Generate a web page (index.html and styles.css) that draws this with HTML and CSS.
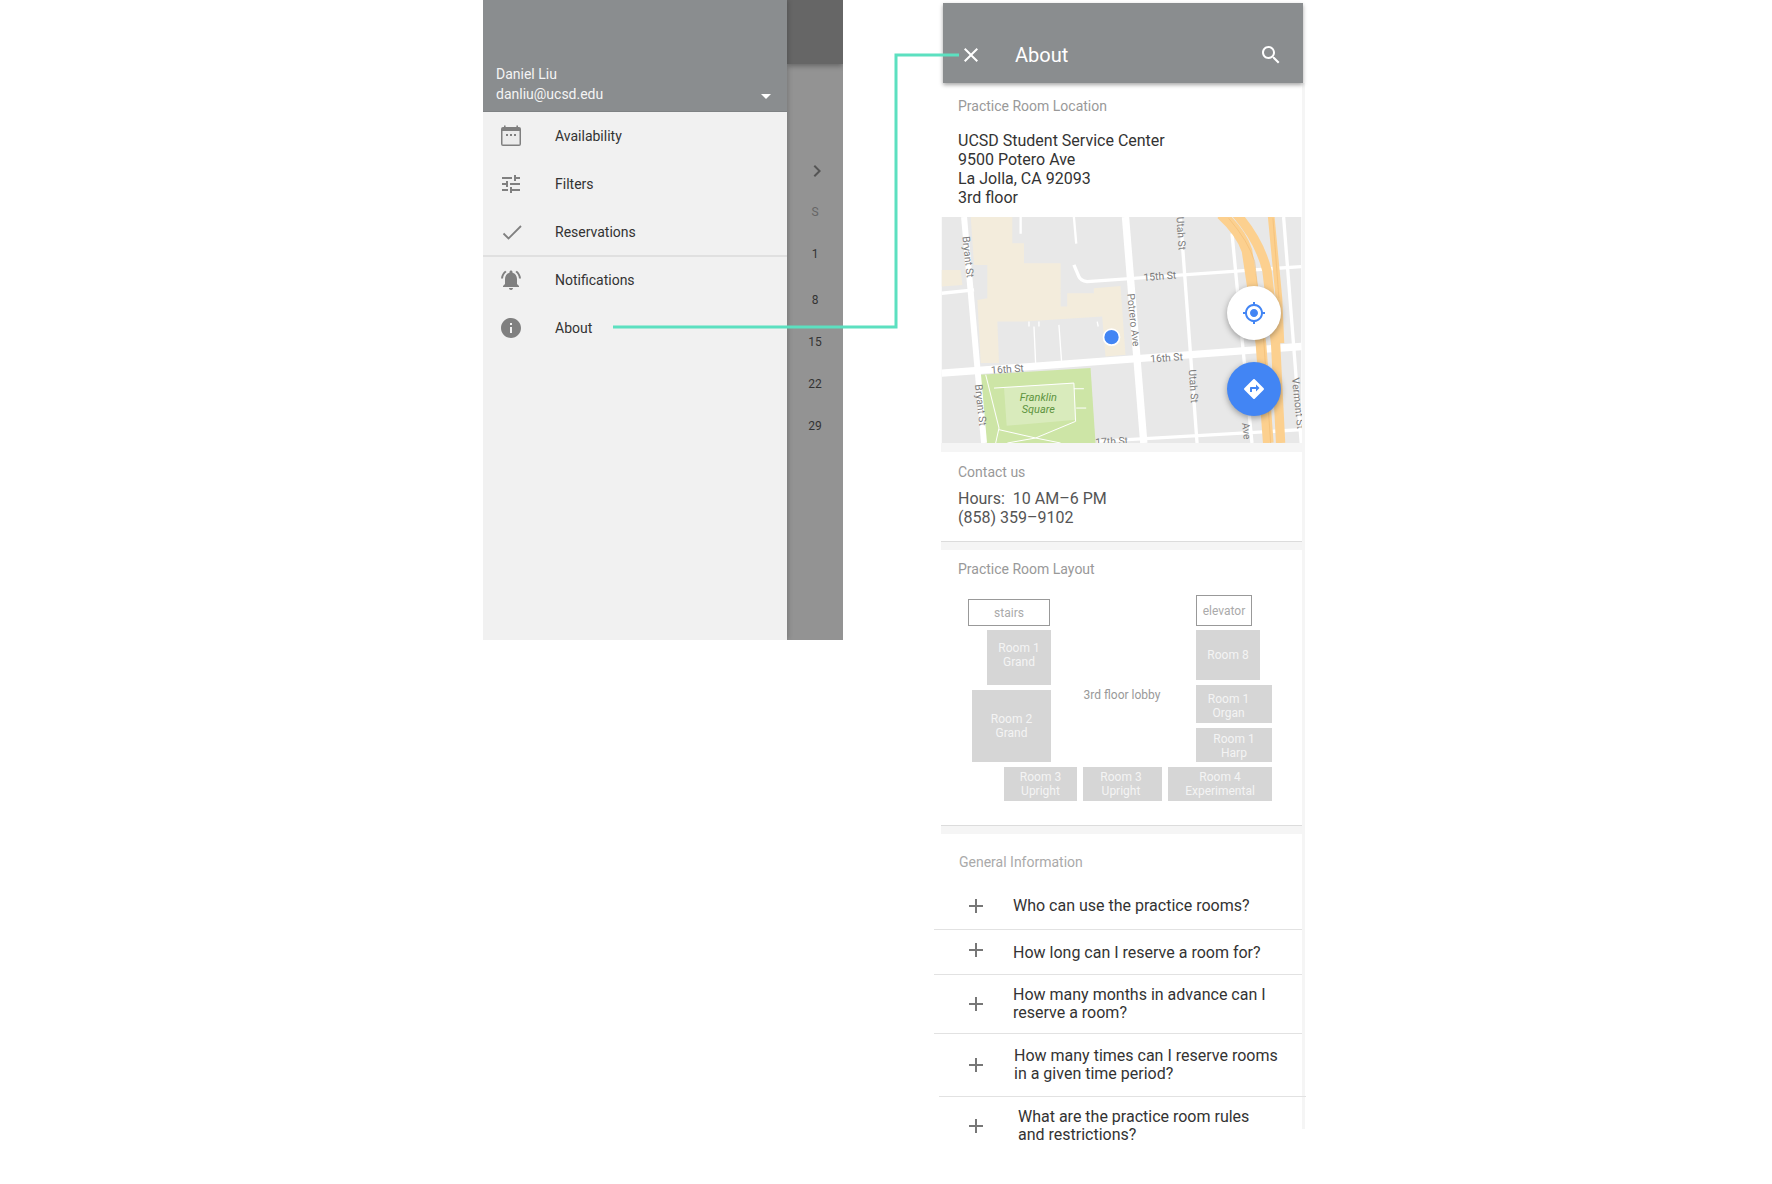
FILE: index.html
```html
<!DOCTYPE html>
<html lang="en">
<head>
<meta charset="utf-8">
<title>About</title>
<link rel="stylesheet" href="styles.css">
</head>
<body>
<div class="stage">
  <section class="menu-screen">
    <aside class="drawer">
      <header class="account">
        <div>Daniel Liu</div>
        <div class="account-mail">danliu@ucsd.edu<span class="caret"></span></div>
      </header>
      <nav class="nav">
        <div class="nav-row">
          <svg class="nav-icon" viewBox="0 0 24 24"><path fill="#808080" d="M5 1.500h1.600V3h10.800V1.500H19V3h1a2 2 0 0 1 2 2v15a2 2 0 0 1-2 2H4a2 2 0 0 1-2-2V5a2 2 0 0 1 2-2h1z"/><rect x="3.500" y="7" width="17" height="13.500" fill="#ececec"/><rect x="7" y="10" width="2" height="2" fill="#808080"/><rect x="11" y="10" width="2" height="2" fill="#808080"/><rect x="15" y="10" width="2" height="2" fill="#808080"/></svg>
          <span>Availability</span>
        </div>
        <div class="nav-row">
          <svg class="nav-icon" viewBox="0 0 24 24"><path fill="#808080" d="M3 17v2h6v-2H3zM3 5v2h10V5H3zm10 16v-2h8v-2h-8v-2h-2v6h2zM7 9v2H3v2h4v2h2V9H7zm14 4v-2H11v2h10zm-6-4h2V7h4V5h-4V3h-2v6z"/></svg>
          <span>Filters</span>
        </div>
        <div class="nav-row">
          <svg class="nav-icon" viewBox="0 0 24 24"><path fill="none" stroke="#808080" stroke-width="1.800" d="M4.500 13.500l5 5L22 6"/></svg>
          <span>Reservations</span>
        </div>
        <div class="nav-rule"></div>
        <div class="nav-row">
          <svg class="nav-icon" viewBox="0 0 24 24"><path fill="#808080" d="M7.580 4.080L6.150 2.650C3.750 4.480 2.170 7.300 2.030 10.500h2c.15-2.650 1.510-4.970 3.550-6.420zm12.390 6.420h2c-.15-3.200-1.730-6.020-4.120-7.850l-1.420 1.430c2.020 1.450 3.390 3.770 3.540 6.420zM18 11c0-3.070-1.640-5.640-4.500-6.320V4c0-.83-.67-1.500-1.500-1.500s-1.500.67-1.500 1.500v.68C7.630 5.360 6 7.920 6 11v5l-2 2v1h16v-1l-2-2v-5zm-6 11c.14 0 .27-.01.4-.04.65-.14 1.180-.58 1.440-1.180.1-.24.15-.5.15-.78h-4c.01 1.100.9 2 2.010 2z"/></svg>
          <span>Notifications</span>
        </div>
        <div class="nav-row">
          <svg class="nav-icon" viewBox="0 0 24 24"><path fill="#808080" d="M12 2C6.480 2 2 6.480 2 12s4.480 10 10 10 10-4.480 10-10S17.520 2 12 2zm1 15h-2v-6h2v6zm0-8h-2V7h2v2z"/></svg>
          <span>About</span>
        </div>
      </nav>
    </aside>
    <div class="behind">
      <div class="behind-bar"></div>
      <svg class="chevron" viewBox="0 0 24 24"><path fill="#555" d="M10 6L8.590 7.410 13.170 12l-4.580 4.590L10 18l6-6z"/></svg>
      <div class="day day-head">S</div>
      <div class="day">1</div>
      <div class="day day-eight">8</div>
      <div class="day day-after">15</div>
      <div class="day">22</div>
      <div class="day">29</div>
    </div>
  </section>

  <section class="about-screen">
    <header class="appbar">
      <svg class="bar-icon" viewBox="0 0 24 24"><path fill="#fff" d="M19 6.410L17.590 5 12 10.590 6.410 5 5 6.410 10.590 12 5 17.590 6.410 19 12 13.410 17.590 19 19 17.590 13.410 12z"/></svg>
      <h1 class="bar-title">About</h1>
      <svg class="bar-icon" viewBox="0 0 24 24"><path fill="#fff" d="M15.500 14h-.79l-.28-.27C15.410 12.590 16 11.110 16 9.500 16 5.910 13.090 3 9.500 3S3 5.910 3 9.500 5.910 16 9.500 16c1.610 0 3.090-.59 4.230-1.570l.27.28v.79l5 4.990L20.490 19l-4.990-5zm-6 0C7.010 14 5 11.990 5 9.500S7.010 5 9.500 5 14 7.010 14 9.500 11.990 14 9.500 14z"/></svg>
    </header>
    <div class="content">
      <div class="location">
        <h2 class="label">Practice Room Location</h2>
        <p class="address">UCSD Student Service Center<br>9500 Potero Ave<br>La Jolla, CA 92093<br>3rd floor</p>
      </div>
      <div class="map">
        <svg class="map-art" viewBox="33 21 1080 679">
          <rect x="33" y="21" width="1080" height="679" fill="#e8e8e8"/>
          <path fill="#f3ecdc" d="M120 21h125v79h35v60h110v130h20v-40h80v-15l80-7 15 207-60 5-10-120-235 15h-80l5 125h-55l-10-190 30-5V165h-40zM33 180h57l5 45-62 5z"/>
          <path fill="#cde5a6" d="M148 495l332-20 15 225H165z"/>
          <path fill="#d9ebbc" d="M220 533l210-15 7 112-209 18z"/>
          <g fill="none" stroke="#fff">
            <path stroke-width="22" d="M33 490L1113 410"/>
            <path stroke-width="18" d="M100 21l60 679"/>
            <path stroke-width="22" d="M585 21l55 679"/>
            <path stroke-width="10" d="M33 250l97-10M430 165l15 35q5 12 25 15L1113 170"/>
            <path stroke-width="10" d="M750 21l50 679M1060 21l53 679M500 695l613-35M905 70l60 630"/>
            <path stroke-width="7" d="M270 21v50M430 21l7 80"/>
            <path stroke-width="4" d="M310 350l5 110M385 345l8 110M295 335v15M325 335v15M500 335l3 15"/>
            <path stroke-width="3" d="M165 495l40 160-10 45M205 660l110 25 120-50-5-115-240 15M230 700l85-15 75 15M430 537h30M437 595h30"/>
          </g>
          <g fill="none" stroke="#fcd08f">
            <path stroke-width="32" d="M872 12q60 55 78 110l42 280 22 298"/>
            <path stroke-width="28" d="M918 12q70 80 92 170l26 220 15 298"/>
            <path stroke-width="20" d="M1022 12l24 253 6 135"/>
          </g>
          <g fill="none" stroke="#f2bd74" stroke-width="2">
            <path d="M895 25q60 70 78 130l28 245 20 300"/>
            <path d="M1028 25l18 240"/>
          </g>
          <g class="map-text">
            <text transform="translate(95 80) rotate(84)">Bryant St</text>
            <text transform="translate(133 525) rotate(84)">Bryant St</text>
            <text transform="translate(590 252) rotate(84)">Potrero Ave</text>
            <text transform="translate(775 480) rotate(86)">Utah St</text>
            <text transform="translate(738 21) rotate(86)">Utah St</text>
            <text transform="translate(1085 505) rotate(84)">Vermont St</text>
            <text transform="translate(640 213) rotate(-4)">15th St</text>
            <text transform="translate(660 458) rotate(-4)">16th St</text>
            <text transform="translate(182 492) rotate(-4)">16th St</text>
            <text transform="translate(495 708) rotate(-3)">17th St</text>
            <text transform="translate(935 640) rotate(84)">Ave</text>
          </g>
          <text class="park-text" x="323" y="573" text-anchor="middle">Franklin</text>
          <text class="park-text" x="323" y="609" text-anchor="middle">Square</text>
          <circle cx="543" cy="382" r="24" fill="#4285f4" stroke="#fff" stroke-width="5"/>
        </svg>
        <div class="fab fab-locate">
          <svg class="fab-icon" viewBox="0 0 24 24"><path fill="#4285f4" d="M12 8c-2.210 0-4 1.790-4 4s1.790 4 4 4 4-1.790 4-4-1.790-4-4-4zm8.940 3c-.46-4.170-3.770-7.480-7.940-7.940V1h-2v2.060C6.830 3.520 3.520 6.830 3.060 11H1v2h2.060c.46 4.170 3.770 7.480 7.940 7.940V23h2v-2.060c4.170-.46 7.480-3.770 7.940-7.940H23v-2h-2.060zM12 19c-3.870 0-7-3.130-7-7s3.130-7 7-7 7 3.130 7 7-3.130 7-7 7z"/></svg>
        </div>
        <div class="fab fab-route">
          <svg class="fab-icon" viewBox="0 0 24 24"><path fill="#fff" d="M21.710 11.290l-9-9c-.39-.39-1.020-.39-1.410 0l-9 9c-.39.39-.39 1.020 0 1.410l9 9c.39.39 1.020.39 1.410 0l9-9c.39-.38.39-1.010 0-1.410zM14 14.500V12h-4v3H8v-4c0-.55.45-1 1-1h5V7.500l3.500 3.500-3.500 3.500z"/></svg>
        </div>
      </div>
      <div class="contact">
        <h2 class="label">Contact us</h2>
        <p class="contact-text">Hours:&nbsp; 10 AM–6 PM<br>(858) 359–9102</p>
      </div>
      <div class="layout">
        <h2 class="label">Practice Room Layout</h2>
        <div class="plan">
          <div class="outline stairs">stairs</div>
          <div class="outline elevator">elevator</div>
          <div class="room r1g">Room 1<br>Grand</div>
          <div class="room r8">Room 8</div>
          <div class="room r1o">Room 1<br>Organ</div>
          <div class="room r1h">Room 1<br>Harp</div>
          <div class="room r2g">Room 2<br>Grand</div>
          <div class="room r3a">Room 3<br>Upright</div>
          <div class="room r3b">Room 3<br>Upright</div>
          <div class="room r4">Room 4<br>Experimental</div>
          <div class="lobby">3rd floor lobby</div>
        </div>
      </div>
      <div class="general">
        <h2 class="label general-label">General Information</h2>
        <div class="faq faq-1"><span class="plus"></span><span>Who can use the practice rooms?</span></div>
        <div class="faq faq-2"><span class="plus"></span><span>How long can I reserve a room for?</span></div>
        <div class="faq faq-3"><span class="plus"></span><span>How many months in advance can I<br>reserve a room?</span></div>
        <div class="faq faq-4"><span class="plus"></span><span>How many times can I reserve rooms<br>in a given time period?</span></div>
        <div class="faq faq-5"><span class="plus"></span><span>What are the practice room rules<br>and restrictions?</span></div>
      </div>
    </div>
  </section>

  <svg class="connector" viewBox="0 0 1772 1184"><path fill="none" stroke="#5ce0c0" stroke-width="3" d="M613 327H896V55H959"/></svg>
</div>
</body>
</html>
```
FILE: styles.css
```css
* { box-sizing: border-box; }
html, body { margin: 0; padding: 0; background: #fff; }
body { font-family: Roboto, "Liberation Sans", sans-serif; overflow: hidden; }
h1, h2, p { margin: 0; font-weight: 400; }

.stage { position: relative; width: 1772px; height: 1184px; overflow: hidden; }

/* Left screen */
.menu-screen { position: absolute; left: 483px; top: 0; width: 360px; height: 640px; display: flex; overflow: hidden; }
.drawer { width: 304px; background: #f1f1f1; position: relative; z-index: 2; box-shadow: 1px 0 5px rgba(0,0,0,.2); }
.account { height: 112px; background: #8a8d8f; color: #f4f4f4; font-size: 14px; line-height: 20px; padding: 64px 13px 0; border-bottom: 1px solid #7f8284; }
.account-mail { display: flex; justify-content: space-between; align-items: center; }
.caret { width: 0; height: 0; border: 5px solid transparent; border-top-color: #fff; border-bottom-width: 0; margin: 4px 3px 0 0; }
.nav { display: flex; flex-direction: column; }
.nav-row { height: 48px; display: flex; align-items: center; padding-left: 16px; gap: 32px; font-size: 14px; color: #333; }
.nav-icon { width: 24px; height: 24px; flex: none; }
.nav-rule { height: 2px; margin: -1px 0 -1px; background: #e0e0e0; position: relative; }

.behind { width: 56px; background: #939393; display: flex; flex-direction: column; align-items: center; color: #333; font-size: 12px; position: relative; }
.behind-bar { align-self: stretch; height: 64px; background: #666; box-shadow: 0 2px 5px rgba(0,0,0,.3); flex: none; }
.chevron { width: 24px; height: 24px; margin: 95px 0 0 3px; flex: none; }
.day { height: 42px; line-height: 42px; }
.day-head { color: #666; margin-top: 9px; height: 41px; line-height: 41px; }
.day-eight { margin-top: 4px; }

/* Right screen */
.about-screen { position: absolute; left: 941px; top: 3px; width: 365px; }
.appbar { margin-left: 2px; width: 360px; height: 80px; background: #8a8d8f; display: flex; align-items: center; padding: 24px 20px 0 16px; box-shadow: 0 2px 4px rgba(0,0,0,.35); position: relative; z-index: 2; color: #fff; }
.bar-icon { width: 24px; height: 24px; flex: none; }
.bar-title { font-size: 20px; flex: 1; margin-left: 32px; }

.content { width: 364px; border-right: 3px solid #f5f5f5; }
.label { font-size: 14px; line-height: 16px; color: #999; }

.location { height: 134px; padding: 15px 0 0 17px; }
.address { font-size: 16px; line-height: 19px; color: #333; margin-top: 17px; }

.map { position: relative; height: 226px; }
.map-art { display: block; width: 361px; height: 226px; }
.map-text { font: 31px Roboto, sans-serif; fill: #7b7b7b; }
.park-text { font: italic 33px Roboto, sans-serif; fill: #5e9440; }
.fab { position: absolute; left: 286px; width: 54px; height: 54px; border-radius: 50%; display: flex; align-items: center; justify-content: center; box-shadow: 0 2px 6px rgba(0,0,0,.35); }
.fab-locate { top: 69px; background: #fff; }
.fab-route { top: 145px; background: #4285f4; }
.fab-icon { width: 24px; height: 24px; }

.contact { height: 99px; border-top: 9px solid #f5f5f5; border-bottom: 1px solid #dcdcdc; padding: 12px 0 0 17px; }
.contact-text { font-size: 16px; line-height: 19px; color: #555; margin-top: 9px; }

.layout { height: 284px; border-top: 8px solid #f5f5f5; border-bottom: 1px solid #dcdcdc; padding: 11px 0 0 17px; }
.plan { position: relative; margin-top: 1px; }
.plan > div { position: absolute; font-size: 12px; line-height: 14px; text-align: center; }
.outline { border: 1px solid #999; color: #aaa; display: flex; align-items: center; justify-content: center; }
.stairs { left: 10px; top: 21px; width: 82px; height: 27px; }
.elevator { left: 238px; top: 17px; width: 56px; height: 31px; }
.room { background: #d6d6d6; color: #f4f4f4; padding-top: 2px; display: flex; align-items: center; justify-content: center; }
.r1g { left: 29px; top: 52px; width: 64px; height: 55px; padding-bottom: 8px; }
.r8 { left: 238px; top: 52px; width: 64px; height: 50px; padding-bottom: 3px; }
.r1o { left: 238px; top: 107px; width: 76px; height: 38px; padding-top: 4px; padding-right: 11px; }
.r1h { left: 238px; top: 150px; width: 76px; height: 34px; }
.r2g { left: 14px; top: 112px; width: 79px; height: 72px; padding-bottom: 3px; }
.r3a { left: 46px; top: 189px; width: 73px; height: 34px; padding-top: 0; }
.r3b { left: 125px; top: 189px; width: 79px; height: 34px; padding-bottom: 2px; padding-right: 3px; }
.r4 { left: 210px; top: 189px; width: 104px; height: 34px; padding-top: 0; }
.lobby { left: 124px; top: 110px; width: 80px; color: #999; white-space: nowrap; }

.general { border-top: 8px solid #f5f5f5; padding-top: 20px; height: 303px; position: relative; }
.general-label { margin-left: 18px; color: #aaa; }
.faq { display: flex; align-items: center; margin-left: -7px; font-size: 16px; line-height: 18px; color: #333; border-bottom: 1px solid #e2e2e2; }
.faq > span:last-child { display: block; }
.plus { position: relative; width: 14px; height: 14px; flex: none; margin: 0 30px 0 35px; }
.plus::before, .plus::after { content: ""; position: absolute; background: #777; }
.plus::before { left: 0; right: 0; top: 6px; height: 2px; }
.plus::after { top: 0; bottom: 0; left: 6px; width: 2px; }
.faq-1 { margin-top: 14px; height: 46px; padding-bottom: 1px; }
.faq-2 { height: 45px; padding-top: 2px; }
.faq-2 .plus { margin-top: -6px; }
.faq-3 { height: 59px; }
.faq-4 { height: 63px; margin-left: -2px; margin-right: -4px; }
.faq-4 .plus { margin: 0 31px 0 30px; }
.faq-5 { height: 62px; border-bottom: 0; padding-bottom: 5px; }
.faq-5 .plus { margin-right: 35px; }

.connector { position: absolute; left: 0; top: 0; width: 1772px; height: 1184px; z-index: 5; pointer-events: none; }
```
